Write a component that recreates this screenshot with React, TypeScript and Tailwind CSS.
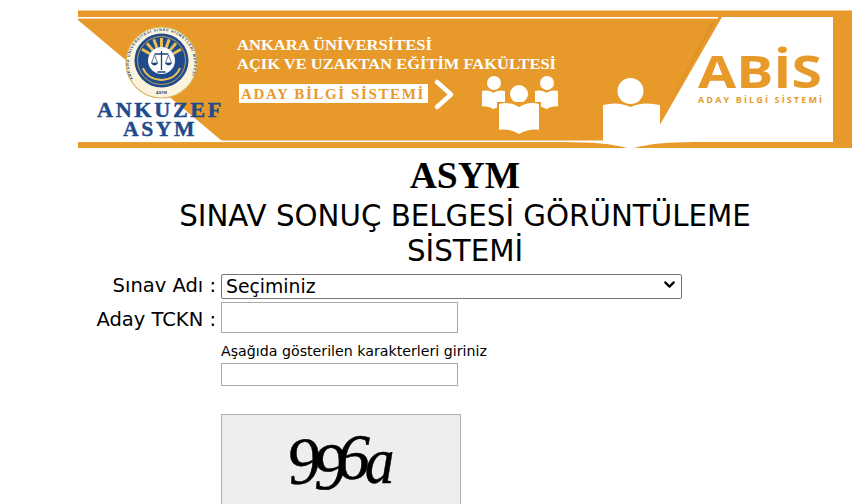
import { ChevronDown } from "lucide-react";

const orange = "#e79a2a";

function Book({ x, y, w, h }: { x: number; y: number; w: number; h: number }) {
  const m = x + w / 2;
  return (
    <path
      d={`M${x} ${y}Q${x + w / 4} ${y - h * 0.1} ${m} ${y + h * 0.1}Q${x + w * 0.75} ${y - h * 0.1} ${x + w} ${y}V${y + h * 0.86}Q${x + w * 0.75} ${y + h * 0.8} ${m} ${y + h}Q${x + w / 4} ${y + h * 0.8} ${x} ${y + h * 0.86}Z`}
      fill="#fff"
    />
  );
}

function Seal() {
  const rays = [-60, -40, -20, 0, 20, 40, 60];
  return (
    <g>
      <circle cx="161.5" cy="61.5" r="35.5" fill="#fbf3dc" stroke="#d9b45a" strokeWidth="1.2" />
      <defs>
        <path id="sealArc" d="M133 78A32.5 32.5 0 1 1 190 78" />
      </defs>
      <text fontSize="3.7" fontWeight="700" fill="#27477f" fontFamily="'Liberation Sans', sans-serif">
        <textPath href="#sealArc" textLength="130">ANKARA ÜNİVERSİTESİ SINAV HİZMETLERİ MERKEZİ</textPath>
      </text>
      <text x="161.5" y="92.5" textAnchor="middle" fontSize="3.8" fontWeight="700" fill="#27477f" fontFamily="'Liberation Sans', sans-serif">
        ASYM
      </text>
      <circle cx="161.5" cy="59.5" r="27" fill="#1f4a8c" />
      <circle cx="161.5" cy="59.5" r="24" fill="none" stroke="#e3b94c" strokeWidth="0.8" />
      {rays.map((a) => (
        <rect key={a} x="160" y="37" width="3" height="9" fill="#e7bf55" transform={`rotate(${a} 161.5 59.5)`} />
      ))}
      <path d="M143 67Q147 78 161.5 79Q176 78 180 67" fill="none" stroke="#e7bf55" strokeWidth="2" />
      <circle cx="161.5" cy="59.5" r="13.5" fill="#fff" />
      <path d="M161.5 50V69M154.5 53H168.5M157.5 71H165.5" stroke="#1f3f78" strokeWidth="1.3" fill="none" />
      <path d="M151.5 62L154.5 54L157.5 62ZM165.5 62L168.5 54L171.5 62Z" fill="none" stroke="#1f3f78" strokeWidth="0.7" />
      <path d="M151 62H158Q154.5 67 151 62ZM165 62H172Q168.5 67 165 62Z" fill="#1f3f78" />
    </g>
  );
}

function Banner() {
  const serif = "'Liberation Serif', serif";
  return (
    <svg viewBox="78 9 774 138" className="block w-[774px] h-[138px]">
      <rect x="78" y="9.5" width="774" height="137.5" fill={orange} />
      <rect x="78" y="16" width="640" height="1.6" fill="#fff" />
      <rect x="78" y="139.5" width="586" height="1.6" fill="#fff" />
      <path d="M78 19L222 140H78Z" fill="#fff" />
      <path d="M722 16H833V141H650Z" fill="#fff" />
      <path d="M716 19L660 120L655 130L710 24Z" fill="#c9801c" opacity="0.35" />

      <Seal />
      <text x="97" y="116" fontFamily={serif} fontWeight="700" fontSize="21" letterSpacing="2.5" stroke="#1f4a8c" strokeWidth="0.4" fill="#1f4a8c" textLength="127" lengthAdjust="spacingAndGlyphs">ANKUZEF</text>
      <text x="123" y="135" fontFamily={serif} fontWeight="700" fontSize="21" letterSpacing="2.5" stroke="#1f4a8c" strokeWidth="0.4" fill="#1f4a8c" textLength="74" lengthAdjust="spacingAndGlyphs">ASYM</text>

      <text x="237" y="49" fontFamily={serif} fontWeight="700" fontSize="15" fill="#fff" textLength="195" lengthAdjust="spacingAndGlyphs">ANKARA ÜNİVERSİTESİ</text>
      <text x="237" y="68" fontFamily={serif} fontWeight="700" fontSize="15" fill="#fff" textLength="319" lengthAdjust="spacingAndGlyphs">AÇIK VE UZAKTAN EĞİTİM FAKÜLTESİ</text>
      <rect x="239" y="83" width="189" height="19" fill="#fff" />
      <text x="241" y="98" fontFamily={serif} fontWeight="700" fontSize="14" letterSpacing="1.5" fill={orange} textLength="184" lengthAdjust="spacingAndGlyphs">ADAY BİLGİ SİSTEMİ</text>
      <path d="M437 81L451 93.5L437 106" fill="none" stroke="#fff" strokeWidth="4.5" strokeLinecap="round" strokeLinejoin="round" />

      <circle cx="494" cy="82" r="7" fill="#fff" />
      <circle cx="547" cy="82" r="7" fill="#fff" />
      <Book x={482} y={90} w={23} h={18} />
      <Book x={535} y={90} w={23} h={18} />
      <circle cx="519" cy="93" r="10" fill={orange} />
      <circle cx="519" cy="93" r="9" fill="#fff" />
      <rect x="497" y="101" width="44" height="33" fill={orange} />
      <Book x={499} y={103} w={40} h={30} />

      <circle cx="630.5" cy="90" r="13" fill="#fff" />
      <path d="M603 104Q618 100 630.5 106Q643 100 660 104V141Q680 140 695 141Q655 141 634 147H627Q606 141 565 141Q590 140 603 141Z" fill="#fff" />

      <text x="698" y="87" fontFamily="'Open Sans', sans-serif" fontWeight="700" fontSize="45" fill={orange} textLength="124" lengthAdjust="spacingAndGlyphs">ABİS</text>
      <text x="698" y="102" fontFamily="'Open Sans', sans-serif" fontWeight="700" fontSize="9" fill={orange} textLength="124">ADAY BİLGİ SİSTEMİ</text>
    </svg>
  );
}

export default function App() {
  return (
    <div className="h-[504px] overflow-hidden bg-white text-black font-['DejaVu_Sans',sans-serif]">
      <div className="w-[774px] ml-[78px] pt-[10px]">
        <Banner />
        <h1 className="mt-[7px] text-center text-[37.5px] leading-[41px] font-bold font-['Liberation_Serif',serif]">ASYM</h1>
        <h2 className="mx-auto mt-[3px] w-[620px] text-center text-[29.3px] leading-[35px]">
          SINAV SONUÇ BELGESİ GÖRÜNTÜLEME SİSTEMİ
        </h2>

        <div className="grid grid-cols-[138px_1fr] gap-x-[5px] mt-[3px] text-[19.5px]">
          <label className="text-right leading-[24px] mt-[2px]">Sınav Adı :</label>
          <div className="relative w-[461px] h-[25px]">
            <select className="appearance-none w-full h-full border border-[#767676] rounded-[2px] bg-white pl-[4px] pt-[1px] text-[18.8px] leading-[22px]">
              <option>Seçiminiz</option>
            </select>
            <ChevronDown size={17} strokeWidth={3} className="absolute right-[4px] top-[4px] pointer-events-none" />
          </div>

          <label className="text-right leading-[24px] mt-[10px]">Aday TCKN :</label>
          <input type="text" className="mt-[4px] w-[237px] h-[31px] border border-[#a9a9a9]" />

          <div className="col-start-2 mt-[10px] text-[14.2px] leading-[16px]">Aşağıda gösterilen karakterleri giriniz</div>
          <input type="text" className="col-start-2 mt-[4px] w-[237px] h-[23px] border border-[#a9a9a9]" />

          <div className="col-start-2 mt-[28px] w-[240px] h-[120px] border border-[#b0b0b0] bg-[#eeeeee] flex justify-center pt-[14px]">
            <span className="flex italic text-[66px] leading-[66px] blur-[0.5px] font-['Liberation_Serif',serif] [-webkit-text-stroke:0.5px_black] ml-[3px]">
              <span className="-translate-y-[1px] -rotate-6">9</span>
              <span className="-ml-[8px] translate-y-[5px] -rotate-3">9</span>
              <span className="-ml-[10px] -translate-y-[5px]">6</span>
              <span className="-ml-[7px] -translate-y-[1px] scale-x-90">a</span>
            </span>
          </div>
        </div>
      </div>
    </div>
  );
}
